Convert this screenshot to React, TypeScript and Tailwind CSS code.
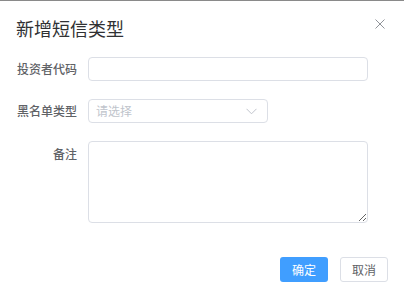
import React from "react";

export default function App() {
  const font = { fontFamily: '"Noto Sans CJK SC", "Noto Sans", sans-serif' };
  return (
    <div className="w-[404px] h-[297px] bg-white border-t border-[#8a8a8a] flex flex-col text-[#606266]" style={font}>
      <div className="flex items-start justify-between pl-4 pr-[19px] pt-[13px] h-[56px]">
        <div className="text-[18px] leading-[28px] text-[#303133]">新增短信类型</div>
        <svg width="10" height="10" viewBox="0 0 10 10" className="mt-[5px]">
          <path d="M0.5 0.5L9.5 9.5M9.5 0.5L0.5 9.5" stroke="#909399" strokeWidth="1" />
        </svg>
      </div>
      <div className="flex flex-col gap-[18px]">
        <div className="flex items-center h-[24px]">
          <div className="w-[77px] text-right pr-[0px] text-[12px] font-medium">投资者代码</div>
          <div className="ml-[11px] w-[280px] h-[24px] border border-[#dcdfe6] rounded-[4px]" />
        </div>
        <div className="flex items-center h-[24px]">
          <div className="w-[77px] text-right text-[12px] font-medium">黑名单类型</div>
          <div className="ml-[11px] w-[180px] h-[24px] border border-[#dcdfe6] rounded-[4px] flex items-center justify-between pl-[7px] pr-[10px]">
            <span className="text-[12px] text-[#c0c4cc]">请选择</span>
            <svg width="11" height="7" viewBox="0 0 11 7">
              <path d="M0.5 0.8L5.5 5.8L10.5 0.8" stroke="#c0c4cc" strokeWidth="1" fill="none" />
            </svg>
          </div>
        </div>
        <div className="flex items-start">
          <div className="w-[77px] text-right text-[12px] font-medium pt-[4px]">备注</div>
          <textarea className="ml-[11px] w-[280px] h-[82px] border border-[#dcdfe6] rounded-[4px] outline-none" />
        </div>
      </div>
      <div className="flex justify-end gap-[12px] pr-[16px] mt-[34px]">
        <button className="w-[48px] h-[25px] rounded-[3px] bg-[#409eff] text-white text-[12px]">确定</button>
        <button className="w-[48px] h-[25px] rounded-[3px] border border-[#dcdfe6] bg-white text-[#606266] text-[12px]">取消</button>
      </div>
    </div>
  );
}
